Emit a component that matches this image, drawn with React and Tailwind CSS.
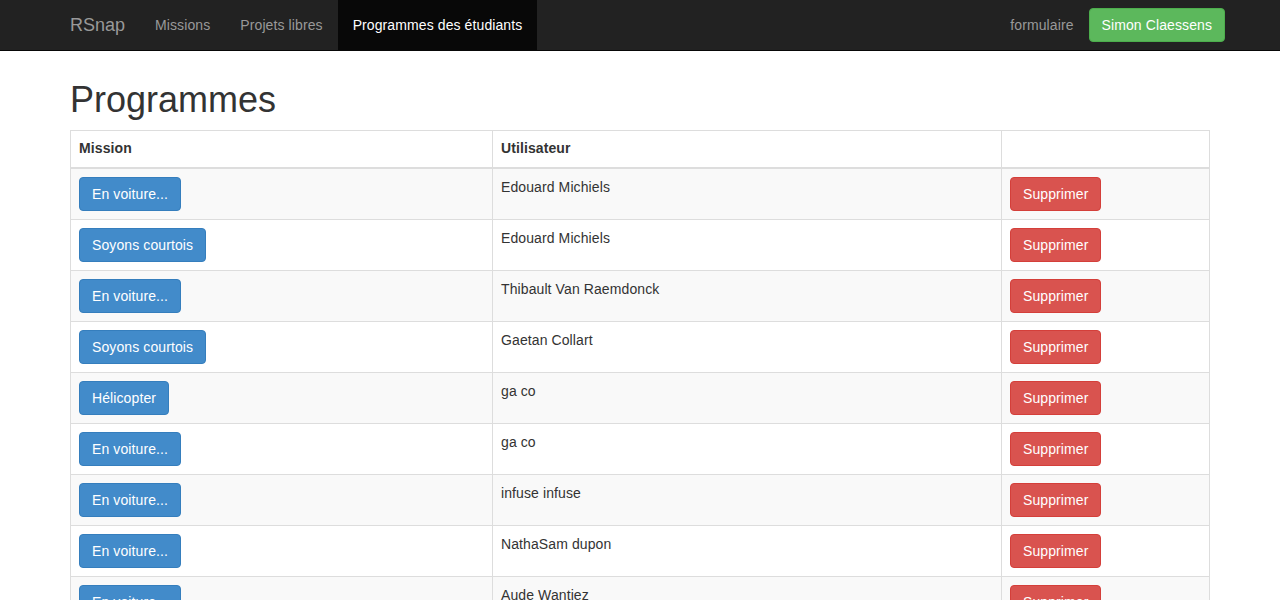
import React from "react";

const rows = [
  { mission: "En voiture...", user: "Edouard Michiels" },
  { mission: "Soyons courtois", user: "Edouard Michiels" },
  { mission: "En voiture...", user: "Thibault Van Raemdonck" },
  { mission: "Soyons courtois", user: "Gaetan Collart" },
  { mission: "Hélicopter", user: "ga co" },
  { mission: "En voiture...", user: "ga co" },
  { mission: "En voiture...", user: "infuse infuse" },
  { mission: "En voiture...", user: "NathaSam dupon" },
  { mission: "En voiture...", user: "Aude Wantiez" },
  { mission: "Soyons courtois", user: "Aude Wantiez" },
];

const App = () => {
  return (
    <div className="min-h-screen bg-white text-[14px] leading-[20px] tracking-[0.1px] text-[#333]" style={{ fontFamily: '"Liberation Sans", Arial, sans-serif' }}>
      {/* Navbar */}
      <nav className="h-[51px] bg-[#222] border-b border-[#080808]">
        <div className="w-[1170px] mx-auto px-[15px] flex items-start h-[50px]">
          <a className="ml-[-15px] px-[15px] py-[15px] text-[18px] leading-[20px] tracking-normal text-[#999]">RSnap</a>
          <ul className="flex">
            <li><a className="block px-[15px] py-[15px] text-[#999]">Missions</a></li>
            <li><a className="block px-[15px] py-[15px] text-[#999]">Projets libres</a></li>
            <li><a className="block px-[15px] py-[15px] text-white bg-[#080808]">Programmes des étudiants</a></li>
          </ul>
          <div className="ml-auto mr-[-15px] flex items-start">
            <a className="block px-[15px] py-[15px] text-[#999]">formulaire</a>
            <button className="mt-[8px] px-[12px] py-[6px] rounded-[4px] bg-[#5cb85c] border border-[#4cae4c] text-white leading-[20px]">
              Simon Claessens
            </button>
          </div>
        </div>
      </nav>

      {/* Content */}
      <div className="w-[1170px] mx-auto px-[15px]">
        <h1 className="mt-[29px] mb-[10px] text-[36px] leading-[40px] tracking-normal font-medium text-[#333]">Programmes</h1>
        <table className="w-[1140px] border border-[#ddd]">
          <thead>
            <tr>
              <th className="w-[422px] px-[8px] pt-[7px] pb-[9px] text-left font-bold border border-[#ddd] border-b-2">Mission</th>
              <th className="w-[509px] px-[8px] pt-[7px] pb-[9px] text-left font-bold border border-[#ddd] border-b-2">Utilisateur</th>
              <th className="p-[8px] border border-[#ddd] border-b-2"></th>
            </tr>
          </thead>
          <tbody>
            {rows.map((row, index) => (
              <tr key={index} className={index % 2 === 0 ? "bg-[#f9f9f9]" : "bg-white"}>
                <td className="p-[8px] align-top border border-[#ddd]">
                  <button className="px-[12px] py-[6px] rounded-[4px] bg-[#428bca] border border-[#357ebd] text-white leading-[20px]">
                    {row.mission}
                  </button>
                </td>
                <td className="p-[8px] align-top border border-[#ddd]">{row.user}</td>
                <td className="p-[8px] align-top border border-[#ddd]">
                  <button className="px-[12px] py-[6px] rounded-[4px] bg-[#d9534f] border border-[#d43f3a] text-white leading-[20px]">
                    Supprimer
                  </button>
                </td>
              </tr>
            ))}
          </tbody>
        </table>
      </div>
    </div>
  );
};

export default App;
